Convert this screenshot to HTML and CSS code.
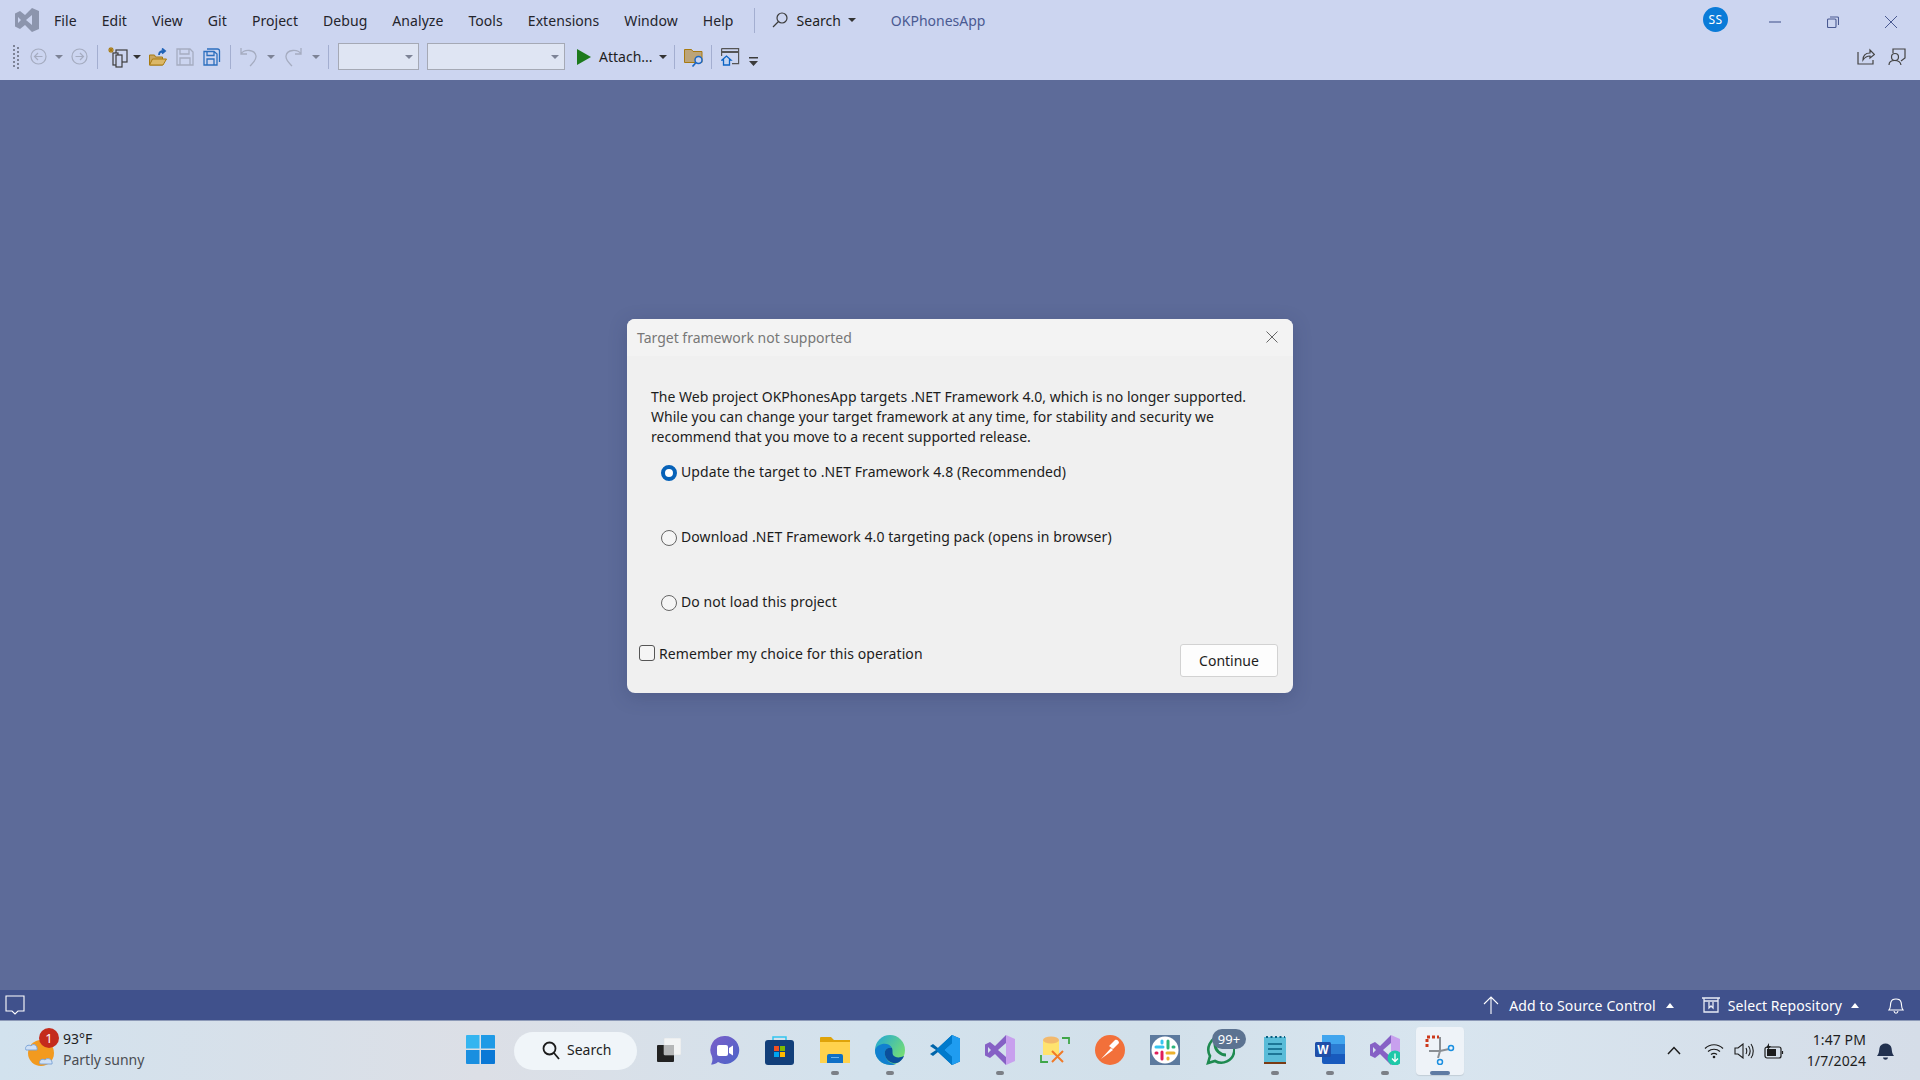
FILE: index.html
```html
<!DOCTYPE html>
<html lang="en">
<head>
    <meta charset="UTF-8">
    <meta name="viewport" content="width=device-width, initial-scale=1.0">
    <title>OKPhonesApp</title>
    <link rel="stylesheet" href="styles.css">
</head>
<body>
    <header class="titlebar">
        <svg class="vs-logo" width="24" height="24" viewBox="0 0 24 24"><path fill="#8c95ad" d="M17 0l7 3v18l-7 3-7-7-5 4-5-2.500V5.500L5 3l5 4zM3 9v6l3-3zm14-2l-6 5 6 5z"/></svg>
        <nav class="menu">
            <span>File</span><span>Edit</span><span>View</span><span>Git</span><span>Project</span><span>Debug</span><span>Analyze</span><span>Tools</span><span>Extensions</span><span>Window</span><span>Help</span>
        </nav>
        <div class="title-sep"></div>
        <div class="title-search">
            <svg width="16" height="16" viewBox="0 0 16 16" fill="none" stroke="#3c3c3c" stroke-width="1.200"><circle cx="10" cy="6" r="5"/><path d="M6.500 9.500L1 15"/></svg>
            <span>Search</span>
            <i class="caret"></i>
        </div>
        <div class="app-name">OKPhonesApp</div>
        <div class="avatar">SS</div>
        <div class="window-btns">
            <svg width="12" height="12" viewBox="0 0 12 12" fill="none" stroke="#4a5a92" stroke-width="1.100"><path d="M0 6h12"/></svg>
            <svg width="12" height="12" viewBox="0 0 12 12" fill="none" stroke="#4a5a92" stroke-width="1.100"><rect x=".5" y="3" width="8.500" height="8.500" rx="1"/><path d="M3 1h7.500a1 1 0 0 1 1 1v7"/></svg>
            <svg width="12" height="12" viewBox="0 0 12 12" fill="none" stroke="#4a5a92" stroke-width="1"><path d="M0 0l12 12M12 0L0 12"/></svg>
        </div>
    </header>

    <div class="toolbar">
        <svg class="ml-13" width="7" height="24" viewBox="0 0 7 24" fill="#7d8396"><path d="M0 0h2v2H0zM4 2h2v2H4zM0 4h2v2H0zM4 6h2v2H4zM0 8h2v2H0zM4 10h2v2H4zM0 12h2v2H0zM4 14h2v2H4zM0 16h2v2H0zM4 18h2v2H4zM0 20h2v2H0zM4 22h2v2H4z"/></svg>
        <svg class="ml-10" width="17" height="17" viewBox="0 0 17 17" fill="none" stroke="#a5acc0" stroke-width="1.200"><circle cx="8.500" cy="8.500" r="7.500"/><path d="M12.500 8.500h-8M8 5L4.500 8.500 8 12"/></svg>
        <i class="caret caret-dim ml-8"></i>
        <svg class="ml-8" width="17" height="17" viewBox="0 0 17 17" fill="none" stroke="#a5acc0" stroke-width="1.200"><circle cx="8.500" cy="8.500" r="7.500"/><path d="M4.500 8.500h8M9 5l3.500 3.500L9 12"/></svg>
        <div class="tool-sep ml-9"></div>
        <svg class="ml-10" width="20" height="22" viewBox="0 0 20 22" fill="none"><path stroke="#a87a10" stroke-width="1.100" d="M3 1v6M0 4h6M1 2l4 4M5 2L1 6"/><rect x="8" y="4" width="11" height="12" fill="#ccd5f0" stroke="#3c3c3c" stroke-width="1.200"/><rect x="5" y="7" width="5" height="12" fill="#ccd5f0" stroke="#3c3c3c" stroke-width="1.200"/><rect x="8" y="9" width="6" height="12" fill="#ccd5f0" stroke="#3c3c3c" stroke-width="1.200"/></svg>
        <i class="caret ml-5"></i>
        <svg class="ml-8" width="18" height="18" viewBox="0 0 18 18"><path fill="#c9a660" stroke="#a87a10" d="M.500 17V7h5l1 2h7v8z"/><path fill="#dcb868" stroke="#a87a10" d="M.500 17l3-6h14l-3.500 6z"/><path fill="none" stroke="#1f63b8" stroke-width="1.800" d="M10 7c0-3 2-4 5-4M13 .5l3 2.500-3 2.500"/></svg>
        <svg class="ml-9" width="18" height="18" viewBox="0 0 18 18" fill="none" stroke="#a5acc0" stroke-width="1.300"><path d="M1 1h13l3 3v13H1zM4 1v5h9V1M4 17v-7h10v7"/></svg>
        <svg class="ml-9" width="18" height="18" viewBox="0 0 18 18" fill="none" stroke="#2c6fbe" stroke-width="1.300"><path d="M4 1h10.500a2 2 0 0 1 2 2v11"/><path d="M1 3.500h10l3 2.500v11H1zM4 3.500v4h7v-4M4 17v-6h7v6"/></svg>
        <div class="tool-sep ml-9"></div>
        <svg class="ml-9" width="17" height="20" viewBox="0 0 17 20" fill="none" stroke="#a5acc0" stroke-width="1.300"><path d="M1 1v6h6M1 7c3-5 14-5 15 2 .5 4-3 7-6 10"/></svg>
        <i class="caret caret-dim ml-10"></i>
        <svg class="ml-10" width="17" height="20" viewBox="0 0 17 20" fill="none" stroke="#a5acc0" stroke-width="1.300"><path d="M16 1v6h-6M16 7C13 2 2 2 1 9c-.5 4 3 7 6 10"/></svg>
        <i class="caret caret-dim ml-10"></i>
        <div class="tool-sep ml-8"></div>
        <div class="combo combo-sm"><i class="caret caret-dim"></i></div>
        <div class="combo combo-lg"><i class="caret caret-dim"></i></div>
        <svg class="ml-12" width="14" height="16" viewBox="0 0 14 16"><path fill="#1d7a1d" d="M0 0l14 8-14 8z"/></svg>
        <span class="attach">Attach...</span>
        <i class="caret ml-6"></i>
        <div class="tool-sep ml-7"></div>
        <svg class="ml-9" width="20" height="20" viewBox="0 0 20 20"><path fill="#bca478" stroke="#a87a10" d="M.500 2.500h7l1.500 2h9v11H.500z"/><circle cx="14.500" cy="13" r="3.500" fill="#ccd5f0" stroke="#1a66c2" stroke-width="1.500"/><path stroke="#1a66c2" stroke-width="1.700" d="M12 15.500l-3.500 4"/></svg>
        <div class="tool-sep ml-7"></div>
        <svg class="ml-9" width="19" height="18" viewBox="0 0 19 18" fill="none"><path stroke="#555" stroke-width="1.200" d="M.6.600h17v15H11M.6 8V.6"/><path fill="#555" d="M0 3h18v2H0z"/><path fill="#c4d4f0" stroke="#0b63c4" stroke-width="1.300" d="M1 12l4.500-4 4.500 4H8.500v5h-6v-5z"/></svg>
        <svg class="overflow-btn ml-9" width="9" height="9" viewBox="0 0 9 9" fill="#3c3c3c"><path d="M0 0h9v1.500H0zM0 4h9L4.500 9z"/></svg>
        <div class="toolbar-end">
            <svg width="18" height="17" viewBox="0 0 18 17" fill="none" stroke="#444" stroke-width="1.200"><path d="M1 4v12h15v-4"/><path d="M6 12c0-5 3-7 7-7V2l4.500 4.500L13 10V8c-3 0-5 1-7 4z"/></svg>
            <svg width="18" height="18" viewBox="0 0 18 18" fill="none" stroke="#444" stroke-width="1.200"><path d="M5 5V1h12v9l-4 3"/><circle cx="7" cy="9" r="3.500" fill="#ccd5f0"/><path d="M1 17c0-6 11-6 12 0"/></svg>
        </div>
    </div>

    <main class="workspace">
        <section class="dialog">
            <div class="dialog-head">
                <span>Target framework not supported</span>
                <svg width="12" height="12" viewBox="0 0 12 12" fill="none" stroke="#666" stroke-width="1"><path d="M.5.500l11 11M11.500.500l-11 11"/></svg>
            </div>
            <form class="dialog-body">
                <p class="message">The Web project OKPhonesApp targets .NET Framework 4.0, which is no longer supported. While you can change your target framework at any time, for stability and security we recommend that you move to a recent supported release.</p>
                <label class="option"><input type="radio" name="choice" checked>Update the target to .NET Framework 4.8 (Recommended)</label>
                <label class="option"><input type="radio" name="choice">Download .NET Framework 4.0 targeting pack (opens in browser)</label>
                <label class="option"><input type="radio" name="choice">Do not load this project</label>
                <div class="dialog-foot">
                    <label class="remember"><input type="checkbox">Remember my choice for this operation</label>
                    <button type="button" class="continue">Continue</button>
                </div>
            </form>
        </section>
    </main>

    <footer class="statusbar">
        <svg class="status-comment" width="20" height="20" viewBox="0 0 20 20" fill="none" stroke="#fff" stroke-width="1.100"><path d="M1 1h18v15h-6l-3 3-3-3H1z"/></svg>
        <div class="status-right">
            <div class="status-item item-source">
                <svg width="16" height="18" viewBox="0 0 16 18" fill="none" stroke="#fff" stroke-width="1.100"><path d="M8 18V1M1 8l7-7 7 7"/></svg>
                <span>Add to Source Control</span>
                <i class="caret caret-up"></i>
            </div>
            <div class="status-item item-repo">
                <svg width="18" height="16" viewBox="0 0 18 16" fill="none" stroke="#e8ebf5" stroke-width="1.300"><path d="M0 1h18M2 1v14h14V1M2 4h14M7 5v6l2-2 2 2V5"/></svg>
                <span>Select Repository</span>
                <i class="caret caret-up"></i>
            </div>
            <svg class="status-bell" width="16" height="18" viewBox="0 0 16 18" fill="none" stroke="#fff" stroke-width="1.100"><path d="M1 14c2-2 1-5 2-8 1-4 9-4 10 0 1 3 0 6 2 8zM6 15c.5 3 3.500 3 4 0"/></svg>
        </div>
    </footer>

    <div class="taskbar">
        <div class="weather">
            <div class="weather-icon">
                <svg width="34" height="34" viewBox="0 0 34 34"><circle cx="17" cy="19" r="13" fill="#f29a1f"/><path fill="#cfe0f5" stroke="#7ea6d8" d="M2 16c-2-4 3-6 5-4 2-3 7-1 6 4zM16 30c-2-4 3-6 5-4 2-3 8-1 7 4z"/></svg>
                <span class="weather-badge">1</span>
            </div>
            <div class="weather-text">
                <span class="temp">93°F</span>
                <span class="cond">Partly sunny</span>
            </div>
        </div>
        <div class="task-cell">
            <svg width="29" height="29" viewBox="0 0 29 29"><path fill="#35b5f0" d="M0 1a1 1 0 0 1 1-1h12.500v13.500H0z"/><path fill="#1f9ae6" d="M15 0h13a1 1 0 0 1 1 1v12.500H15z"/><path fill="#1a8fe0" d="M0 15h13.500v14H1a1 1 0 0 1-1-1z"/><path fill="#0a78d6" d="M15 15h14v13a1 1 0 0 1-1 1H15z"/></svg>
        </div>
        <div class="task-search">
            <svg width="18" height="19" viewBox="0 0 18 19" fill="none" stroke="#1c1c1c" stroke-width="1.800"><circle cx="7.500" cy="7.500" r="6"/><path d="M12 12l5 6"/></svg>
            <span>Search</span>
        </div>
        <div class="task-cell cell-first">
            <svg class="task-view" width="24" height="24" viewBox="0 0 24 24"><rect y="7" width="17" height="17" rx="1" fill="#222"/><rect x="7" width="17" height="17" rx="1" fill="#f2f4f5" stroke="#d8dcdf" stroke-width=".5"/><rect x="7" y="7" width="10" height="10" fill="#b5b7b8"/></svg>
        </div>
        <div class="task-cell">
            <svg width="30" height="30" viewBox="0 0 30 30"><defs><linearGradient id="chatG" x1="0" y1="0" x2="1" y2="1"><stop offset="0" stop-color="#7b5fc9"/><stop offset="1" stop-color="#4b63c8"/></linearGradient></defs><path fill="url(#chatG)" d="M15 1a14 14 0 1 1-7 26c-2 2-5 2.500-7 2.500 1-2 2-4 1-8A14 14 0 0 1 15 1z"/><rect x="7" y="10" width="11" height="11" rx="2" fill="#fff"/><path fill="#fff" d="M19 13l4-2.500v10L19 18z"/></svg>
        </div>
        <div class="task-cell">
            <svg width="29" height="30" viewBox="0 0 29 30"><path fill="none" stroke="#32c5f0" stroke-width="1.500" d="M8 7V2h13v5"/><rect y="5" width="29" height="25" rx="3" fill="#123f7a"/><path fill="#f25022" d="M9 11h5v5H9z"/><path fill="#7fba00" d="M15 11h5v5h-5z"/><path fill="#00a4ef" d="M9 17h5v5H9z"/><path fill="#ffb900" d="M15 17h5v5h-5z"/></svg>
        </div>
        <div class="task-cell has-dot">
            <svg width="30" height="27" viewBox="0 0 30 27"><path fill="#dfa30a" d="M0 2a1 1 0 0 1 1-1h10l3 3h16v5H0z"/><path fill="#ffd24d" d="M0 6h30v21H0z"/><path fill="#0f6fc6" d="M7 20a2 2 0 0 1 2-2h12a2 2 0 0 1 2 2v7H7z"/><path fill="#6ab4ef" d="M11 21h8v1h-8z"/></svg>
        </div>
        <div class="task-cell has-dot">
            <svg width="30" height="30" viewBox="0 0 30 30"><defs><linearGradient id="edgeG" x1="0" y1="0" x2="1" y2=".7"><stop offset="0" stop-color="#1fa5d8"/><stop offset="1" stop-color="#7ae070"/></linearGradient></defs><circle cx="15" cy="15" r="15" fill="url(#edgeG)"/><path fill="#1180d0" d="M15 30A15 15 0 0 1 0 15C2 8 14 6 17 13c-5-1-8 2-7 7 1 5 5 9 11 9-2 1-4 1-6 1z"/><path fill="#0b4f9c" d="M17 13c-5-1-8 2-7 7 1 5 6 9 12 8 3-1 6-4 7-7-4 2-9 2-11-1-1-2 0-4-1-7z"/></svg>
        </div>
        <div class="task-cell">
            <svg width="30" height="30" viewBox="0 0 30 30"><path fill="#0065a9" d="M22 0l8 3.500v23L22 30 8 17l-5 4-3-2 6-4-6-4 3-2 5 4z"/><path fill="#1f9cf0" d="M22 0l8 3.500v23L22 30zM22 8l-8 7 8 7z"/><path fill="#007acc" d="M22 0L8 13l-2 2 2 2 14 13v-8l-8-7 8-7z"/></svg>
        </div>
        <div class="task-cell has-dot">
            <svg width="30" height="30" viewBox="0 0 30 30"><path fill="#c8a0ee" d="M21 0l9 4v22l-9 4z"/><path fill="#8661c5" d="M21 0v8l-8 7 8 7v8L10 19l-5 4-5-2.500v-11L5 7l5 4zM3 12v6l3-3z"/></svg>
        </div>
        <div class="task-cell">
            <svg width="30" height="29" viewBox="0 0 30 29" fill="none"><path stroke="#3fa648" stroke-width="1.800" d="M22 3h7v6M1 20v7h7"/><path fill="#ffe36e" d="M3 5h16v15H3z"/><ellipse cx="11" cy="5" rx="8" ry="3.500" fill="#f2b96d"/><path stroke="#f07a28" stroke-width="2" d="M12 27l11-11M23 27L12 16"/></svg>
        </div>
        <div class="task-cell">
            <svg width="30" height="30" viewBox="0 0 30 30"><circle cx="15" cy="15" r="15" fill="#f2703a"/><path fill="#fff" d="M6 24l10-11 2 2zM14 11l6-6c2-1 4 1 4 3l-6 6z"/></svg>
        </div>
        <div class="task-cell">
            <svg width="30" height="30" viewBox="0 0 30 30"><rect width="30" height="30" fill="#5c7a9e"/><circle cx="15" cy="15" r="13.500" fill="#fff"/><path stroke="#36c5f0" stroke-width="3" stroke-linecap="round" d="M6 12h7M12 6v2"/><path stroke="#2eb67d" stroke-width="3" stroke-linecap="round" d="M18 6v7M23 12h1"/><path stroke="#e01e5a" stroke-width="3" stroke-linecap="round" d="M12 17v7M6 18h1"/><path stroke="#ecb22e" stroke-width="3" stroke-linecap="round" d="M17 18h7M18 23v1"/></svg>
        </div>
        <div class="task-cell">
            <svg width="30" height="30" viewBox="0 0 30 30" fill="none"><path stroke="#1e8a50" stroke-width="2.600" d="M3 28l2-7a13 13 0 1 1 5 5z"/><path stroke="#1e8a50" stroke-width="3" d="M10 9c0 6 5 11 11 11"/></svg>
            <span class="count-badge">99+</span>
        </div>
        <div class="task-cell has-dot">
            <svg width="22" height="30" viewBox="0 0 22 30"><rect y="2" width="22" height="26" fill="#5abcd8"/><path fill="#7a3b14" d="M0 27h22v2H0z"/><path stroke="#0a5f80" stroke-width="2" stroke-dasharray="2 2.500" d="M2 2h19"/><path stroke="#0a5f80" stroke-width="1.600" d="M4 9h14M4 14h14M4 19h14"/></svg>
        </div>
        <div class="task-cell has-dot">
            <svg width="30" height="29" viewBox="0 0 30 29"><path fill="#41a5ee" d="M7 0h21a2 2 0 0 1 2 2v7H7z"/><path fill="#2b7cd3" d="M7 9h23v10H7z"/><path fill="#185abd" d="M7 19h23v10H9a2 2 0 0 1-2-2z"/><rect y="7" width="16" height="15" rx="1.500" fill="#1f4fa8"/><text class="word-w" x="8" y="19" text-anchor="middle">W</text></svg>
        </div>
        <div class="task-cell has-dot">
            <svg width="30" height="30" viewBox="0 0 30 30"><path fill="#c8a0ee" d="M21 0l9 4v22l-9 4z"/><path fill="#8661c5" d="M21 0v8l-8 7 8 7v8L10 19l-5 4-5-2.500v-11L5 7l5 4zM3 12v6l3-3z"/><circle cx="25" cy="23" r="7.500" fill="#1ec8a8"/><path fill="none" stroke="#fff" stroke-width="1.300" d="M25 18.500v8M22 23.500l3 3 3-3"/></svg>
        </div>
        <div class="task-cell snip">
            <svg width="30" height="30" viewBox="0 0 30 30" fill="none"><path stroke="#cc3a1c" stroke-width="3" stroke-dasharray="3 2" d="M2 12V2h12"/><path stroke="#8a8f94" stroke-width="2" d="M15 2v14H4"/><path stroke="#8a8f94" stroke-width="2" d="M15 16l9-2M15 16l-2 7"/><circle cx="26" cy="13" r="2.500" stroke="#1a8fe0" stroke-width="1.500"/><circle cx="15" cy="27" r="2.500" stroke="#1a8fe0" stroke-width="1.500"/></svg>
        </div>
        <div class="tray">
            <svg width="14" height="9" viewBox="0 0 14 9" fill="none" stroke="#1c1c1c" stroke-width="1.500"><path d="M1 8l6-6.500L13 8"/></svg>
            <div class="tray-icons">
                <svg width="20" height="16" viewBox="0 0 20 16" fill="none" stroke="#1c1c1c" stroke-width="1.200"><path d="M1 5.500c5-5 13-5 18 0M4 8.500c3.500-3 8.500-3 12 0M7 11.500c2-1.500 4-1.500 6 0"/><circle cx="10" cy="14" r="1.300" fill="#1c1c1c" stroke="none"/></svg>
                <svg width="20" height="16" viewBox="0 0 20 16" fill="none" stroke="#1c1c1c" stroke-width="1.100"><path d="M1 5h3l5-4v14l-5-4H1zM12 5c1 2 1 4 0 6M14.500 3c2 3 2 7 0 10M17 1c3 4 3 10 0 14"/></svg>
                <svg width="20" height="16" viewBox="0 0 20 16" fill="none" stroke="#1c1c1c" stroke-width="1.200"><rect x="1" y="4" width="16" height="11" rx="2"/><rect x="3" y="6" width="9" height="7" fill="#1c1c1c" stroke="none"/><path d="M18.500 8v3"/><path fill="#1c1c1c" stroke="none" d="M5 0L2 5h2L3 8l4-5H5z"/></svg>
            </div>
            <div class="clock"><span>1:47 PM</span><span>1/7/2024</span></div>
            <svg width="17" height="20" viewBox="0 0 17 20" fill="#22314f"><path d="M0 15c2-2 2-5 2.500-8 1-6 11-6 12 0 .5 3 .5 6 2.500 8zM6 16.500h5c-.5 3-4.500 3-5 0z"/></svg>
        </div>
    </div>
</body>
</html>
```
FILE: styles.css
```css
* {
    box-sizing: border-box;
}
html, body {
    margin: 0;
    height: 100%;
}
body {
    font-family: "Noto Sans", Roboto, Arial, sans-serif;
    font-size: 14px;
    display: flex;
    flex-direction: column;
    height: 100vh;
    overflow: hidden;
    background-color: #5d6b99;
    color: #1e1e1e;
}
svg {
    flex: none;
    display: block;
}

.caret {
    display: block;
    flex: none;
    width: 0;
    height: 0;
    border-left: 4px solid transparent;
    border-right: 4px solid transparent;
    border-top: 4px solid #333;
}
.caret-dim {
    border-top-color: #7d8396;
}
.caret-up {
    border-top: 0;
    border-bottom: 5px solid #fff;
}

/* title bar */
.titlebar {
    height: 40px;
    flex: none;
    display: flex;
    align-items: center;
    background: #ccd5f0;
    padding-left: 15px;
}
.vs-logo {
    margin-bottom: 1px;
}
.menu {
    display: flex;
    gap: 25px;
    margin-left: 15px;
    color: #24242c;
    letter-spacing: .06px;
}
.title-sep {
    width: 1px;
    height: 25px;
    background: #a3aed0;
    margin-left: 20px;
}
.title-search {
    display: flex;
    align-items: center;
    margin-left: 17px;
}
.title-search span {
    margin-left: 9px;
    margin-right: 7px;
}
.app-name {
    margin-left: 35px;
    color: #4a5a92;
}
.avatar {
    width: 25px;
    height: 25px;
    border-radius: 50%;
    background: #0a7bd8;
    color: #fff;
    font-size: 12px;
    letter-spacing: .5px;
    display: flex;
    align-items: center;
    justify-content: center;
    margin-left: auto;
    margin-bottom: 2px;
}
.window-btns {
    display: flex;
    gap: 46px;
    margin-left: 41px;
    margin-right: 23px;
    margin-top: 3px;
}

/* tool bar */
.toolbar {
    height: 40px;
    flex: none;
    display: flex;
    align-items: center;
    background: #ccd5f0;
    padding-bottom: 7px;
}
.ml-5 { margin-left: 5px; }
.ml-6 { margin-left: 6px; }
.ml-7 { margin-left: 7px; }
.ml-8 { margin-left: 8px; }
.ml-9 { margin-left: 9px; }
.ml-10 { margin-left: 10px; }
.ml-12 { margin-left: 12px; }
.ml-13 { margin-left: 13px; }
.tool-sep {
    width: 1px;
    height: 24px;
    background: #a3aed0;
}
.combo {
    height: 27px;
    margin-left: 9px;
    border: 1px solid #a5a9b5;
    background: #dfe5f3;
    display: flex;
    align-items: center;
    justify-content: flex-end;
    padding-right: 5px;
}
.combo-sm {
    width: 81px;
}
.combo-lg {
    width: 138px;
    margin-left: 8px;
}
.attach {
    margin-left: 8px;
    width: 54px;
    white-space: nowrap;
}
.overflow-btn {
    margin-top: 10px;
}
.toolbar-end {
    margin-left: auto;
    margin-right: 14px;
    display: flex;
    gap: 13px;
}

/* workspace and dialog */
.workspace {
    flex: 1;
    min-height: 0;
    display: flex;
    justify-content: center;
    align-items: flex-start;
    padding-top: 239px;
}
.dialog {
    width: 666px;
    height: 374px;
    border-radius: 8px;
    background: #f0f0f0;
    overflow: hidden;
    box-shadow: 0 4px 18px rgba(40, 50, 90, .25);
}
.dialog-head {
    height: 37px;
    background: #f3f3f3;
    color: #777;
    padding: 0 15px 0 10px;
    display: flex;
    align-items: center;
    justify-content: space-between;
}
.dialog-head svg {
    margin-bottom: 2px;
}
.dialog-body {
    padding: 31px 15px 0 12px;
}
.message {
    margin: 0 0 0 12px;
    line-height: 20px;
    width: 612px;
    color: #1c1c1c;
    letter-spacing: .02px;
}
.option {
    display: flex;
    align-items: center;
    height: 20px;
    margin: 0 0 45px 22px;
    color: #1c1c1c;
    letter-spacing: .08px;
}
.message + .option {
    margin-top: 14px;
}
.option input {
    appearance: none;
    flex: none;
    width: 16px;
    height: 16px;
    margin: 4px 4px 0 0;
    border: 1px solid #666;
    border-radius: 50%;
    background: #f5f5f5;
}
.option input:checked {
    border: 4px solid #0762b8;
    background: #fff;
}
.dialog-foot {
    display: flex;
    justify-content: space-between;
    align-items: flex-start;
    margin-top: -12px;
}
.remember {
    display: flex;
    align-items: center;
    color: #1c1c1c;
    height: 18px;
    letter-spacing: .08px;
}
.remember input {
    appearance: none;
    flex: none;
    width: 16px;
    height: 16px;
    margin: 0 4px 0 0;
    border: 1px solid #555;
    border-radius: 3px;
    background: #f5f5f5;
}
.continue {
    width: 98px;
    height: 33px;
    background: #fdfdfd;
    border: 1px solid #d2d2d2;
    border-radius: 3px;
    font: inherit;
    color: #1c1c1c;
}

/* status bar */
.statusbar {
    height: 31px;
    flex: none;
    display: flex;
    align-items: center;
    justify-content: space-between;
    background: #40518c;
    border-bottom: 1px solid #8d9ab8;
    color: #fff;
    padding-left: 5px;
}
.status-right {
    display: flex;
    align-items: center;
    margin-right: 16px;
}
.status-item {
    display: flex;
    align-items: center;
}
.status-item span {
    white-space: nowrap;
}
.item-source {
    margin-right: 28px;
}
.item-source span {
    margin: 0 10px 0 10px;
    letter-spacing: .12px;
}
.item-repo {
    margin-right: 29px;
}
.item-repo span {
    margin: 0 9px 0 8px;
    letter-spacing: .07px;
}

/* task bar */
.taskbar {
    height: 59px;
    flex: none;
    display: flex;
    align-items: center;
    background: linear-gradient(90deg, #d2e2ee 0%, #dcdfe6 25%, #d3e2ed 45%, #d2e0ea 60%, #d8e5ef 75%, #d5dde8 100%);
}
.weather {
    width: 453px;
    display: flex;
    align-items: center;
    padding-left: 24px;
}
.weather-icon {
    position: relative;
    width: 39px;
}
.weather-badge {
    position: absolute;
    left: 15px;
    top: -6px;
    width: 20px;
    height: 20px;
    border-radius: 50%;
    background: #c42b1c;
    color: #fff;
    font-size: 13px;
    text-align: center;
    line-height: 20px;
}
.weather-text {
    display: flex;
    flex-direction: column;
    line-height: 21px;
    margin-bottom: 3px;
}
.cond {
    color: #4a4d52;
}
.task-cell {
    position: relative;
    width: 55px;
    height: 59px;
    padding-bottom: 2px;
    display: flex;
    align-items: center;
    justify-content: center;
    flex: none;
}
.has-dot::after {
    content: "";
    position: absolute;
    left: 24px;
    bottom: 5px;
    width: 8px;
    height: 4px;
    border-radius: 2px;
    background: #7b7f86;
}
.cell-first {
    margin-left: 5px;
}
.task-view {
    margin-right: 2px;
}
.task-search {
    width: 123px;
    height: 38px;
    margin-left: 6px;
    border-radius: 19px;
    background: #f0f5f9;
    display: flex;
    align-items: center;
    gap: 7px;
    padding-left: 28px;
}
.task-search span {
    margin-bottom: 2px;
}
.count-badge {
    position: absolute;
    left: 20px;
    top: 8px;
    width: 34px;
    height: 20px;
    border-radius: 10px;
    background: #5c7391;
    color: #fff;
    font-size: 13px;
    text-align: center;
    line-height: 20px;
}
.word-w {
    fill: #fff;
    font-size: 12px;
    font-weight: 700;
    font-family: "Liberation Sans", sans-serif;
}
.snip {
    width: 48px;
    height: 48px;
    margin-left: 4px;
    border-radius: 4px;
    background: #eef3f8;
    box-shadow: 0 1px 1px rgba(0, 0, 0, .1);
}
.snip::after {
    content: "";
    position: absolute;
    left: 14px;
    bottom: 0;
    width: 20px;
    height: 4px;
    border-radius: 2px;
    background: #5e7ba3;
}
.tray {
    margin-left: auto;
    margin-right: 26px;
    display: flex;
    align-items: center;
}
.tray-icons {
    display: flex;
    gap: 10px;
    margin-left: 23px;
}
.clock {
    display: flex;
    flex-direction: column;
    align-items: flex-end;
    width: 72px;
    margin: 0 11px 2px 10px;
    line-height: 21px;
    white-space: nowrap;
    letter-spacing: .1px;
}
```
